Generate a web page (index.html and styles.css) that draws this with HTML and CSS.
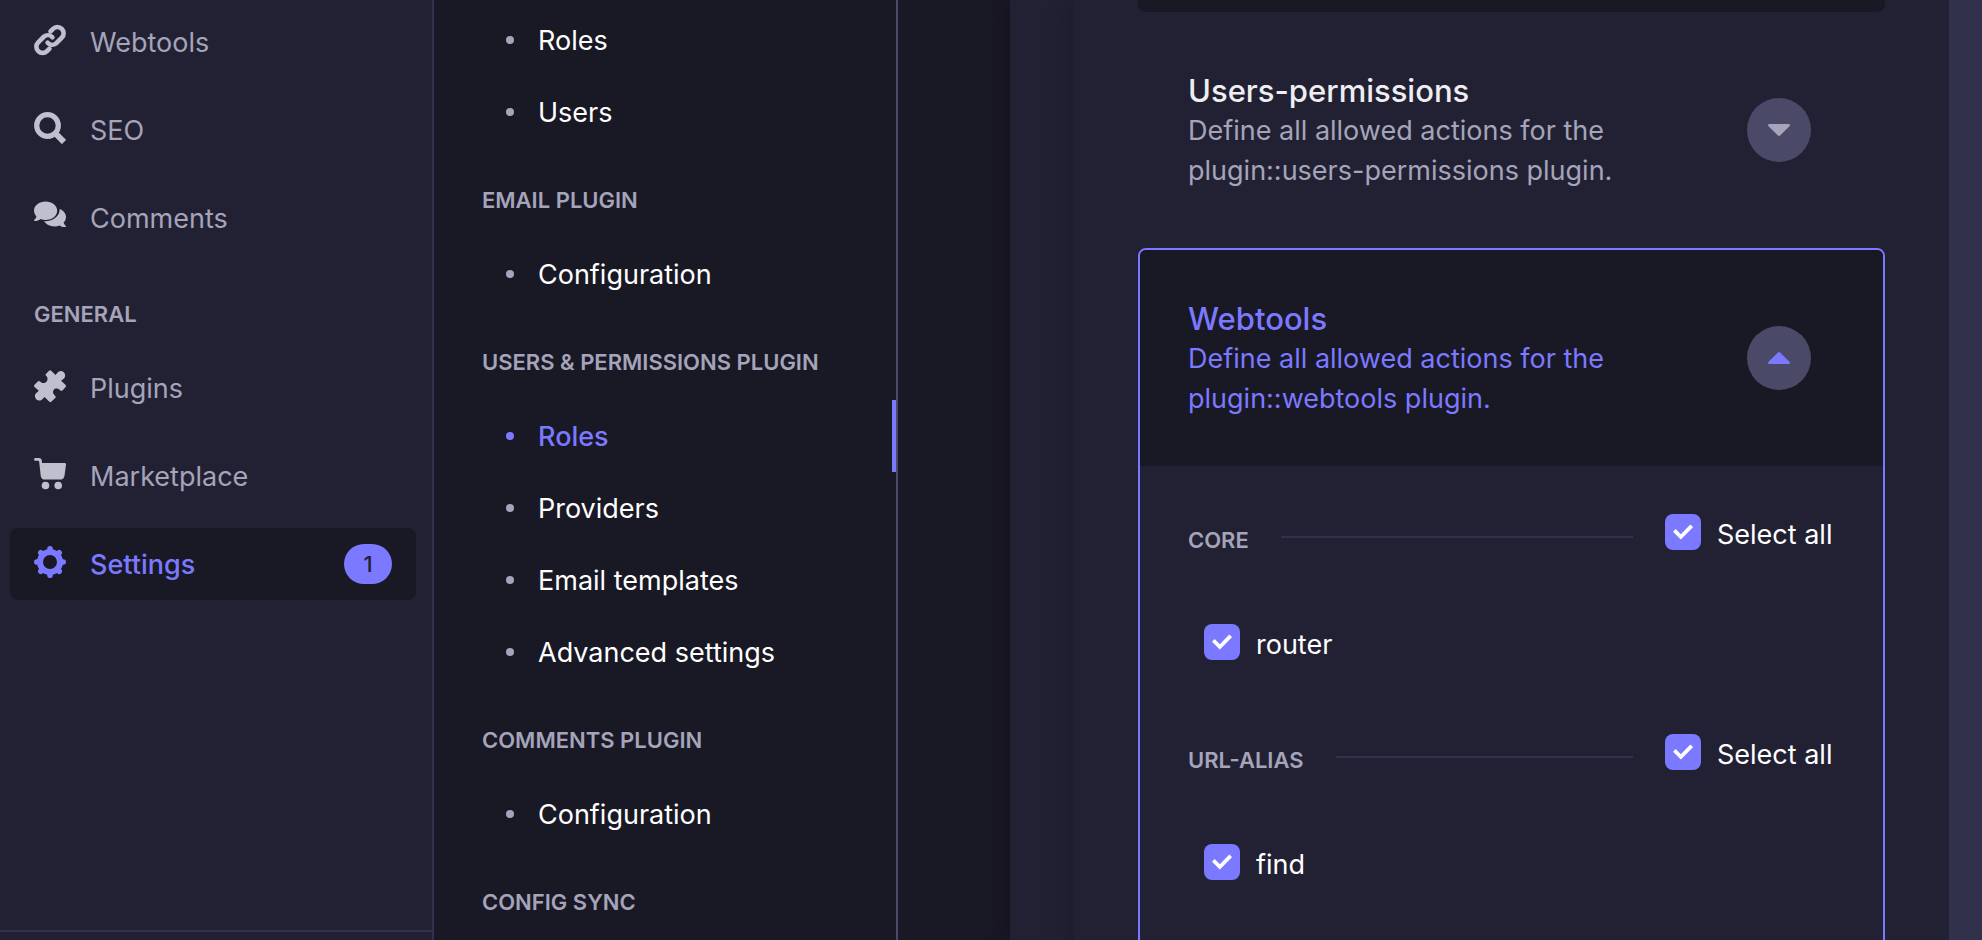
FILE: index.html
```html
<!DOCTYPE html>
<html lang="en">
<head>
<meta charset="utf-8">
<title>Settings - Roles</title>
<link rel="stylesheet" href="styles.css">
</head>
<body>
<div class="app">
  <nav class="sidebar" aria-label="Main">
    <div class="sidebar-menu">
      <a class="nav-link" href="#">
        <svg class="nav-icon" viewBox="0 0 32 32" fill="none" stroke="currentColor" stroke-width="4.600" stroke-linecap="round"><path d="M16.500 7.400 19 4.900a6.200 6.200 0 0 1 8.800 0 6.200 6.200 0 0 1 0 8.800L22 19.500a6.200 6.200 0 0 1-8.400-.7"/><path d="M15.500 24.600l-2.500 2.500a6.200 6.200 0 0 1-8.800 0 6.200 6.200 0 0 1 0-8.800L10 12.500a6.200 6.200 0 0 1 8.400.7"/></svg>
        <span class="nav-text">Webtools</span>
      </a>
      <a class="nav-link" href="#">
        <svg class="nav-icon" viewBox="0 0 32 32" fill="none" stroke="currentColor"><circle cx="13.500" cy="13.500" r="10.800" stroke-width="5.200"/><path d="m20.500 20.500 9.500 9.500" stroke-width="6"/></svg>
        <span class="nav-text">SEO</span>
      </a>
      <a class="nav-link" href="#">
        <svg class="nav-icon" viewBox="0 2 32 32" fill="currentColor"><path d="M11.600 3.500C5.200 3.500 0 7.600 0 12.700c0 2.200 1 4.200 2.500 5.800-.5 2-2.200 3.300-2.300 3.400-.4.400-.1 1.100.5 1.100 2.700 0 4.900-1.300 5.900-2.100 1.500.6 3.200 1 5 1 6.400 0 11.600-4.100 11.600-9.200S18 3.500 11.600 3.500z"/><path d="M29.600 24.600c1.500-1.500 2.400-3.500 2.400-5.700 0-3.500-2.600-6.500-6.400-7.900.6 6.700-6 12.200-14.600 12.200-.3 0-.7 0-1 0 2 3.100 6 5.200 10.500 5.200 1.800 0 3.500-.4 5-1 1 .8 3.200 1.700 5.900 1.700.5 0 .8-.7.4-1.100-.1-.1-1.700-1.400-2.200-3.400z"/></svg>
        <span class="nav-text">Comments</span>
      </a>
      <h2 class="nav-heading">General</h2>
      <a class="nav-link" href="#">
        <svg class="nav-icon" viewBox="0 0 32 32" fill="currentColor"><path d="M12.200 3.700 15 .7q1-1 2.200 0l4.300 4.300 2.600-3q3.300-2.100 5.700.3t.5 6L27.100 10.800l4.500 4.300q.8.900 0 2l-3.100 3.300q-1.200.9-2.300 0c-2.200-2.600-5.200-2.100-6.500-.5-1.300 2-.8 4 1.300 5.800.9.800.9 1.600 0 2.600l-3.500 3.200q-1.200 1-2.400 0L10.600 27l-2.800 2.700q-3 2-5.600-.4-2.400-2.900-.4-5.900L4.800 20.800.5 17q-.9-1 0-2.200l3.300-3.300q1.200-1.100 2.300 0c2.200 2 4.900 2 6.300.3 1.700-1.700 1.500-4.200-.3-6-.8-.8-.7-1.300.1-2.100z"/></svg>
        <span class="nav-text">Plugins</span>
      </a>
      <a class="nav-link" href="#">
        <svg class="nav-icon" viewBox="0 0 32 32" fill="currentColor"><path d="M1.300 0h3.600c1.700 0 2.800 1.200 2.900 2.600L8 5h22.500q1.600 0 1.500 1.600l-1.500 11.100q-.8 3.900-4.500 3.900H11q-3.600 0-4.300-3.900L5.200 4q-.1-1.300-1-1.300H1.300Q0 2.700 0 1.400T1.300 0z"/><circle cx="11.500" cy="27.500" r="3.800"/><circle cx="24.200" cy="27.500" r="3.800"/></svg>
        <span class="nav-text">Marketplace</span>
      </a>
      <a class="nav-link nav-link-active" href="#" aria-current="page">
        <svg class="nav-icon" viewBox="0 0 32 32" fill="none" stroke="currentColor" stroke-linecap="round"><circle cx="16" cy="16" r="10" stroke-width="6"/><path stroke-width="5.600" d="M16 4v-1.200M16 28v1.200M4 16h-1.200M28 16h1.200M7.500 7.500l-.7-.7M24.500 7.500l.7-.7M7.500 24.500l-.7.7M24.500 24.500l.7.7"/></svg>
        <span class="nav-text">Settings</span>
        <span class="badge">1</span>
      </a>
    </div>
    <div class="sidebar-footer"></div>
  </nav>

  <nav class="subnav" aria-label="Settings">
    <ul class="subnav-list">
      <li><a class="subnav-link" href="#">Roles</a></li>
      <li><a class="subnav-link" href="#">Users</a></li>
    </ul>
    <h2 class="subnav-heading">Email Plugin</h2>
    <ul class="subnav-list">
      <li><a class="subnav-link" href="#">Configuration</a></li>
    </ul>
    <h2 class="subnav-heading">Users &amp; Permissions Plugin</h2>
    <ul class="subnav-list">
      <li><a class="subnav-link subnav-link-active" href="#" aria-current="page">Roles</a></li>
      <li><a class="subnav-link" href="#">Providers</a></li>
      <li><a class="subnav-link" href="#">Email templates</a></li>
      <li><a class="subnav-link" href="#">Advanced settings</a></li>
    </ul>
    <h2 class="subnav-heading">Comments Plugin</h2>
    <ul class="subnav-list">
      <li><a class="subnav-link" href="#">Configuration</a></li>
    </ul>
    <h2 class="subnav-heading">Config Sync</h2>
  </nav>

  <main class="content">
    <div class="panel">
      <div class="permissions">
        <section class="accordion accordion-filled"></section>
        <section class="accordion">
          <div class="accordion-header">
            <div class="accordion-copy">
              <h3 class="accordion-title">Users-permissions</h3>
              <p class="accordion-text">Define all allowed actions for the plugin::users-permissions plugin.</p>
            </div>
            <button class="toggle" type="button" aria-expanded="false" aria-label="Expand Users-permissions">
              <svg class="caret" viewBox="0 0 22 12" fill="currentColor"><path d="M1 0h20q1.500.8.700 2l-9.400 9.300q-1.300 1.200-2.600 0L.3 2Q-.5.800 1 0z"/></svg>
            </button>
          </div>
        </section>
        <section class="accordion accordion-open">
          <div class="accordion-header">
            <div class="accordion-copy">
              <h3 class="accordion-title">Webtools</h3>
              <p class="accordion-text">Define all allowed actions for the plugin::webtools plugin.</p>
            </div>
            <button class="toggle" type="button" aria-expanded="true" aria-label="Collapse Webtools">
              <svg class="caret" viewBox="0 0 22 12" fill="currentColor"><path d="M1 12h20q1.500-.8.700-2L12.300.700q-1.300-1.200-2.600 0L.3 10Q-.5 11.200 1 12z"/></svg>
            </button>
          </div>
          <div class="accordion-body">
            <div class="group-header">
              <h4 class="group-title">Core</h4>
              <div class="rule"></div>
              <label class="check check-all"><span class="check-box"><input class="check-input" type="checkbox" checked><svg class="check-mark" viewBox="0 0 10 8" fill="currentColor"><path d="M8.553.397a.2.200 0 0 1 .286 0l1.024 1.037a.2.200 0 0 1 0 .280L4.064 7.677a.2.200 0 0 1-.286 0L.139 3.993a.2.200 0 0 1 0-.28l1.023-1.040a.2.200 0 0 1 .285 0l2.477 2.509z"/></svg></span>Select all</label>
            </div>
            <div class="group-items">
              <label class="check"><span class="check-box"><input class="check-input" type="checkbox" checked><svg class="check-mark" viewBox="0 0 10 8" fill="currentColor"><path d="M8.553.397a.2.200 0 0 1 .286 0l1.024 1.037a.2.200 0 0 1 0 .280L4.064 7.677a.2.200 0 0 1-.286 0L.139 3.993a.2.200 0 0 1 0-.28l1.023-1.040a.2.200 0 0 1 .285 0l2.477 2.509z"/></svg></span>router</label>
            </div>
            <div class="group-header">
              <h4 class="group-title">Url-alias</h4>
              <div class="rule"></div>
              <label class="check check-all"><span class="check-box"><input class="check-input" type="checkbox" checked><svg class="check-mark" viewBox="0 0 10 8" fill="currentColor"><path d="M8.553.397a.2.200 0 0 1 .286 0l1.024 1.037a.2.200 0 0 1 0 .280L4.064 7.677a.2.200 0 0 1-.286 0L.139 3.993a.2.200 0 0 1 0-.28l1.023-1.040a.2.200 0 0 1 .285 0l2.477 2.509z"/></svg></span>Select all</label>
            </div>
            <div class="group-items">
              <label class="check"><span class="check-box"><input class="check-input" type="checkbox" checked><svg class="check-mark" viewBox="0 0 10 8" fill="currentColor"><path d="M8.553.397a.2.200 0 0 1 .286 0l1.024 1.037a.2.200 0 0 1 0 .280L4.064 7.677a.2.200 0 0 1-.286 0L.139 3.993a.2.200 0 0 1 0-.28l1.023-1.040a.2.200 0 0 1 .285 0l2.477 2.509z"/></svg></span>find</label>
            </div>
          </div>
        </section>
      </div>
    </div>
    <div class="gutter"></div>
  </main>
</div>
</body>
</html>
```
FILE: styles.css
```css
:root {
  --surface: #222133;
  --ground: #191825;
  --line: #32314c;
  --line-strong: #4a4a68;
  --muted: #a5a4ba;
  --icon: #c0bfce;
  --primary: #7b79ff;
}

* { box-sizing: border-box; }

body {
  margin: 0;
  background: var(--ground);
  color: #fff;
  font-family: Inter, "Liberation Sans", sans-serif;
  font-size: 27px;
  line-height: 40px;
}

h2, h3, h4, p, ul { margin: 0; padding: 0; }
ul { list-style: none; }
a { color: inherit; text-decoration: none; }

.app {
  display: flex;
  height: 100vh;
  overflow: hidden;
}

/* Main navigation */
.sidebar {
  display: flex;
  flex: none;
  flex-direction: column;
  width: 434px;
  background: var(--surface);
  border-right: 2px solid var(--line);
  color: var(--muted);
}

.sidebar-menu {
  display: flex;
  flex: 1;
  flex-direction: column;
  gap: 16px;
  padding: 6px 16px 0 10px;
}

.sidebar-footer {
  height: 10px;
  border-top: 2px solid var(--line);
}

.nav-link {
  display: flex;
  align-items: center;
  gap: 24px;
  height: 72px;
  padding: 0 24px;
  border-radius: 8px;
}

.nav-icon {
  flex: none;
  width: 32px;
  height: 32px;
  margin-bottom: 4px;
  color: var(--icon);
}

.nav-text {
  flex: 1;
  padding-top: 2px;
}

.nav-link-active {
  background: var(--ground);
  color: var(--primary);
  font-weight: 500;
}

.nav-link-active .nav-icon { color: inherit; }

.badge {
  display: flex;
  align-items: center;
  justify-content: center;
  width: 48px;
  height: 40px;
  border-radius: 20px;
  background: var(--primary);
  color: var(--surface);
  font-size: 22px;
}

.nav-heading,
.subnav-heading,
.group-title {
  color: var(--muted);
  font-size: 22px;
  font-weight: 600;
  line-height: 24px;
  text-transform: uppercase;
}

.nav-heading { padding: 32px 24px 10px; }

/* Settings navigation */
.subnav {
  flex: none;
  width: 464px;
  padding-top: 4px;
  border-right: 2px solid var(--line-strong);
}

.subnav-heading { padding: 40px 48px 26px; }

.subnav-link {
  display: flex;
  align-items: center;
  gap: 24px;
  height: 72px;
  padding: 2px 0 0 72px;
}

.subnav-link::before {
  content: "";
  width: 8px;
  height: 8px;
  margin-bottom: 2px;
  border-radius: 50%;
  background: var(--muted);
}

.subnav-link-active {
  border-right: 4px solid var(--primary);
  color: var(--primary);
  font-weight: 500;
}

.subnav-link-active::before { background: var(--primary); }

/* Role permissions */
.content {
  display: flex;
  flex: 1;
  min-width: 0;
  padding-left: 112px;
}

.panel {
  flex: 1;
  padding-left: 64px;
  background: var(--surface);
  box-shadow: 0 0 24px rgba(3, 3, 5, 0.35);
}

.gutter {
  z-index: 1;
  width: 33px;
  background: var(--line);
}

.permissions {
  display: flex;
  flex-direction: column;
  gap: 8px;
  min-height: 100%;
  padding: 0 64px;
  background: var(--surface);
  box-shadow: 0 0 24px rgba(3, 3, 5, 0.25);
}

.accordion {
  border: 2px solid transparent;
  border-radius: 8px;
}

.accordion-filled {
  height: 12px;
  border-top-left-radius: 0;
  border-top-right-radius: 0;
  border-color: var(--ground);
  background: var(--ground);
}

.accordion-header {
  display: flex;
  align-items: center;
  justify-content: space-between;
  padding: 47px 72px 47px 48px;
}

.accordion-copy {
  max-width: 480px;
  padding-top: 2px;
}

.accordion-title {
  color: #eeeef2;
  font-size: 31px;
  font-weight: 500;
  line-height: 40px;
}

.accordion-text { color: var(--muted); }

.toggle {
  display: flex;
  flex: none;
  align-items: center;
  justify-content: center;
  width: 64px;
  height: 64px;
  padding: 0;
  border: 0;
  border-radius: 50%;
  background: var(--line-strong);
  color: var(--muted);
}

.caret { width: 22px; height: 12px; }

.accordion-open { border-color: var(--primary); }

.accordion-open .accordion-header {
  border-radius: 6px 6px 0 0;
  background: var(--ground);
}

.accordion-open .accordion-title,
.accordion-open .accordion-text,
.accordion-open .toggle { color: var(--primary); }

.accordion-body {
  display: flex;
  flex-direction: column;
  gap: 64px;
  padding: 48px 48px 64px;
}

.group-header {
  display: flex;
  gap: 32px;
  height: 46px;
}

.group-title { padding-top: 14px; }

.rule {
  flex: 1;
  align-self: center;
  height: 2px;
  background: var(--line);
}

.group-items { height: 46px; padding-left: 16px; }

.check {
  display: flex;
  align-items: flex-start;
  gap: 16px;
  line-height: 42px;
}

.check-all { min-width: 170px; }

.check-box {
  display: flex;
  position: relative;
}

.check-input {
  width: 36px;
  height: 36px;
  margin: 0;
  appearance: none;
  border-radius: 8px;
  background: var(--primary);
}

.check-mark {
  position: absolute;
  inset: 10px 8px;
  width: 20px;
  height: 16px;
  color: #fff;
  pointer-events: none;
}
```
